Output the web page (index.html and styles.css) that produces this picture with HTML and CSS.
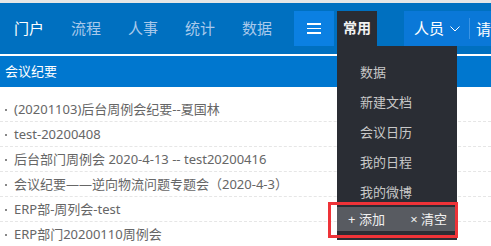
FILE: index.html
```html
<!DOCTYPE html>
<html lang="zh-CN">
<head>
  <meta charset="UTF-8" />
  <meta name="viewport" content="width=device-width, initial-scale=1.0"/>
  <title>门户 – 会议纪要</title>
  <link rel="stylesheet" href="styles.css">
</head>
<body>

  <header class="topbar">
    <nav class="nav">
      <a class="nav-link active">门户</a>
      <a class="nav-link">流程</a>
      <a class="nav-link">人事</a>
      <a class="nav-link">统计</a>
      <a class="nav-link">数据</a>
    </nav>

    <button class="menu-btn"><span></span><span></span><span></span></button>

    <!-- Menu des favoris -->
    <div class="fav">
      <div class="fav-tab">常用</div>
      <div class="fav-menu">
        <ul class="fav-list">
          <li>数据</li>
          <li>新建文档</li>
          <li>会议日历</li>
          <li>我的日程</li>
          <li>我的微博</li>
        </ul>
        <div class="fav-actions">
          <span>+ 添加</span>
          <span>× 清空</span>
        </div>
        <div class="highlight"></div>
      </div>
    </div>

    <div class="search">
      <span class="search-type">人员
        <svg width="10" height="6" viewBox="0 0 10 6"><path d="M0.5 0.5 L5 5 L9.5 0.5" fill="none" stroke="#fff" stroke-width="1"/></svg>
      </span>
      <span class="search-input">请输入关键字</span>
    </div>
  </header>

  <section class="panel">
    <div class="panel-head">会议纪要</div>
    <ul class="news-list">
      <li>(20201103)后台周例会纪要--夏国林</li>
      <li>test-20200408</li>
      <li>后台部门周例会 2020-4-13 -- test20200416</li>
      <li>会议纪要——逆向物流问题专题会（2020-4-3）</li>
      <li>ERP部-周列会-test</li>
      <li>ERP部门20200110周例会</li>
    </ul>
  </section>

</body>
</html>
```

FILE: styles.css
```css
* {
  margin: 0;
  padding: 0;
  box-sizing: border-box;
  font-family: 'Microsoft YaHei', 'Noto Sans', 'Noto Sans CJK SC', sans-serif;
}

html, body {
  overflow: hidden;
}

body {
  background-color: #ffffff;
  width: 491px;
  height: 246px;
}

/* Barre du haut */
.topbar {
  display: flex;
  align-items: flex-start;
  height: 56px;
  padding-top: 8px;
  background-color: #0070c0;
  border-top: 3px solid #e6e6e6;
  border-bottom: 2px solid #ffffff;
  white-space: nowrap;
}

.nav {
  display: flex;
  gap: 27px;
  padding-left: 14px;
}

.nav-link {
  height: 35px;
  line-height: 34px;
  font-size: 15px;
  color: #a9c9eb;
}

.nav-link.active {
  color: #ffffff;
}

.menu-btn {
  width: 40px;
  height: 35px;
  margin-left: 22px;
  border: none;
  background-color: #0b80e2;
  display: flex;
  flex-direction: column;
  justify-content: center;
  align-items: center;
  gap: 3px;
  flex-shrink: 0;
}

.menu-btn span {
  display: block;
  width: 14px;
  height: 1.5px;
  background-color: #ffffff;
}

.fav {
  position: relative;
  margin-left: 3px;
  flex-shrink: 0;
  z-index: 10;
}

.fav-tab {
  width: 40px;
  height: 35px;
  line-height: 34px;
  text-align: center;
  font-size: 14px;
  font-weight: bold;
  color: #f2f2f2;
  background-color: #2a2d34;
}

.fav-menu {
  position: absolute;
  top: 35px;
  left: 0;
  width: 120px;
  padding: 11px 0 9px;
  background-color: #2a2d34;
}

.fav-list {
  list-style: none;
}

.fav-list li {
  height: 30px;
  line-height: 30px;
  padding-left: 23px;
  font-size: 13px;
  color: #c8c8c8;
}

.fav-actions {
  display: flex;
  justify-content: space-between;
  height: 24px;
  line-height: 24px;
  padding: 0 10px 0 11px;
  font-size: 13px;
  color: #f0f0f0;
  background-color: #585b61;
}

/* Cadre rouge d'annotation */
.highlight {
  position: absolute;
  left: -9px;
  top: 156px;
  width: 130px;
  height: 36px;
  border: 3px solid #ee3338;
}

.search {
  display: flex;
  align-items: center;
  height: 35px;
  margin-left: 27px;
  padding-left: 10px;
  width: 200px;
  flex-shrink: 0;
  background-color: #0a78d8;
  color: #ffffff;
  font-size: 15px;
}

.search-type {
  display: flex;
  align-items: center;
  gap: 6px;
  padding-right: 9px;
  border-right: 1px solid #3a94e4;
  height: 21px;
  line-height: 21px;
}

.search-input {
  padding-left: 6px;
}

/* Bloc des comptes rendus */
.panel-head {
  height: 31px;
  line-height: 31px;
  padding-left: 5px;
  font-size: 13px;
  color: #ffffff;
  background-color: #0077cf;
}

.news-list {
  list-style: none;
  padding-top: 10px;
}

.news-list li {
  position: relative;
  height: 25px;
  line-height: 25px;
  padding-left: 14px;
  font-size: 13px;
  color: #666666;
  border-bottom: 1px dashed #e6e6e6;
  white-space: nowrap;
}

.news-list li::before {
  content: '';
  position: absolute;
  left: 5px;
  top: 12px;
  width: 2px;
  height: 2px;
  background-color: #888888;
}
```
